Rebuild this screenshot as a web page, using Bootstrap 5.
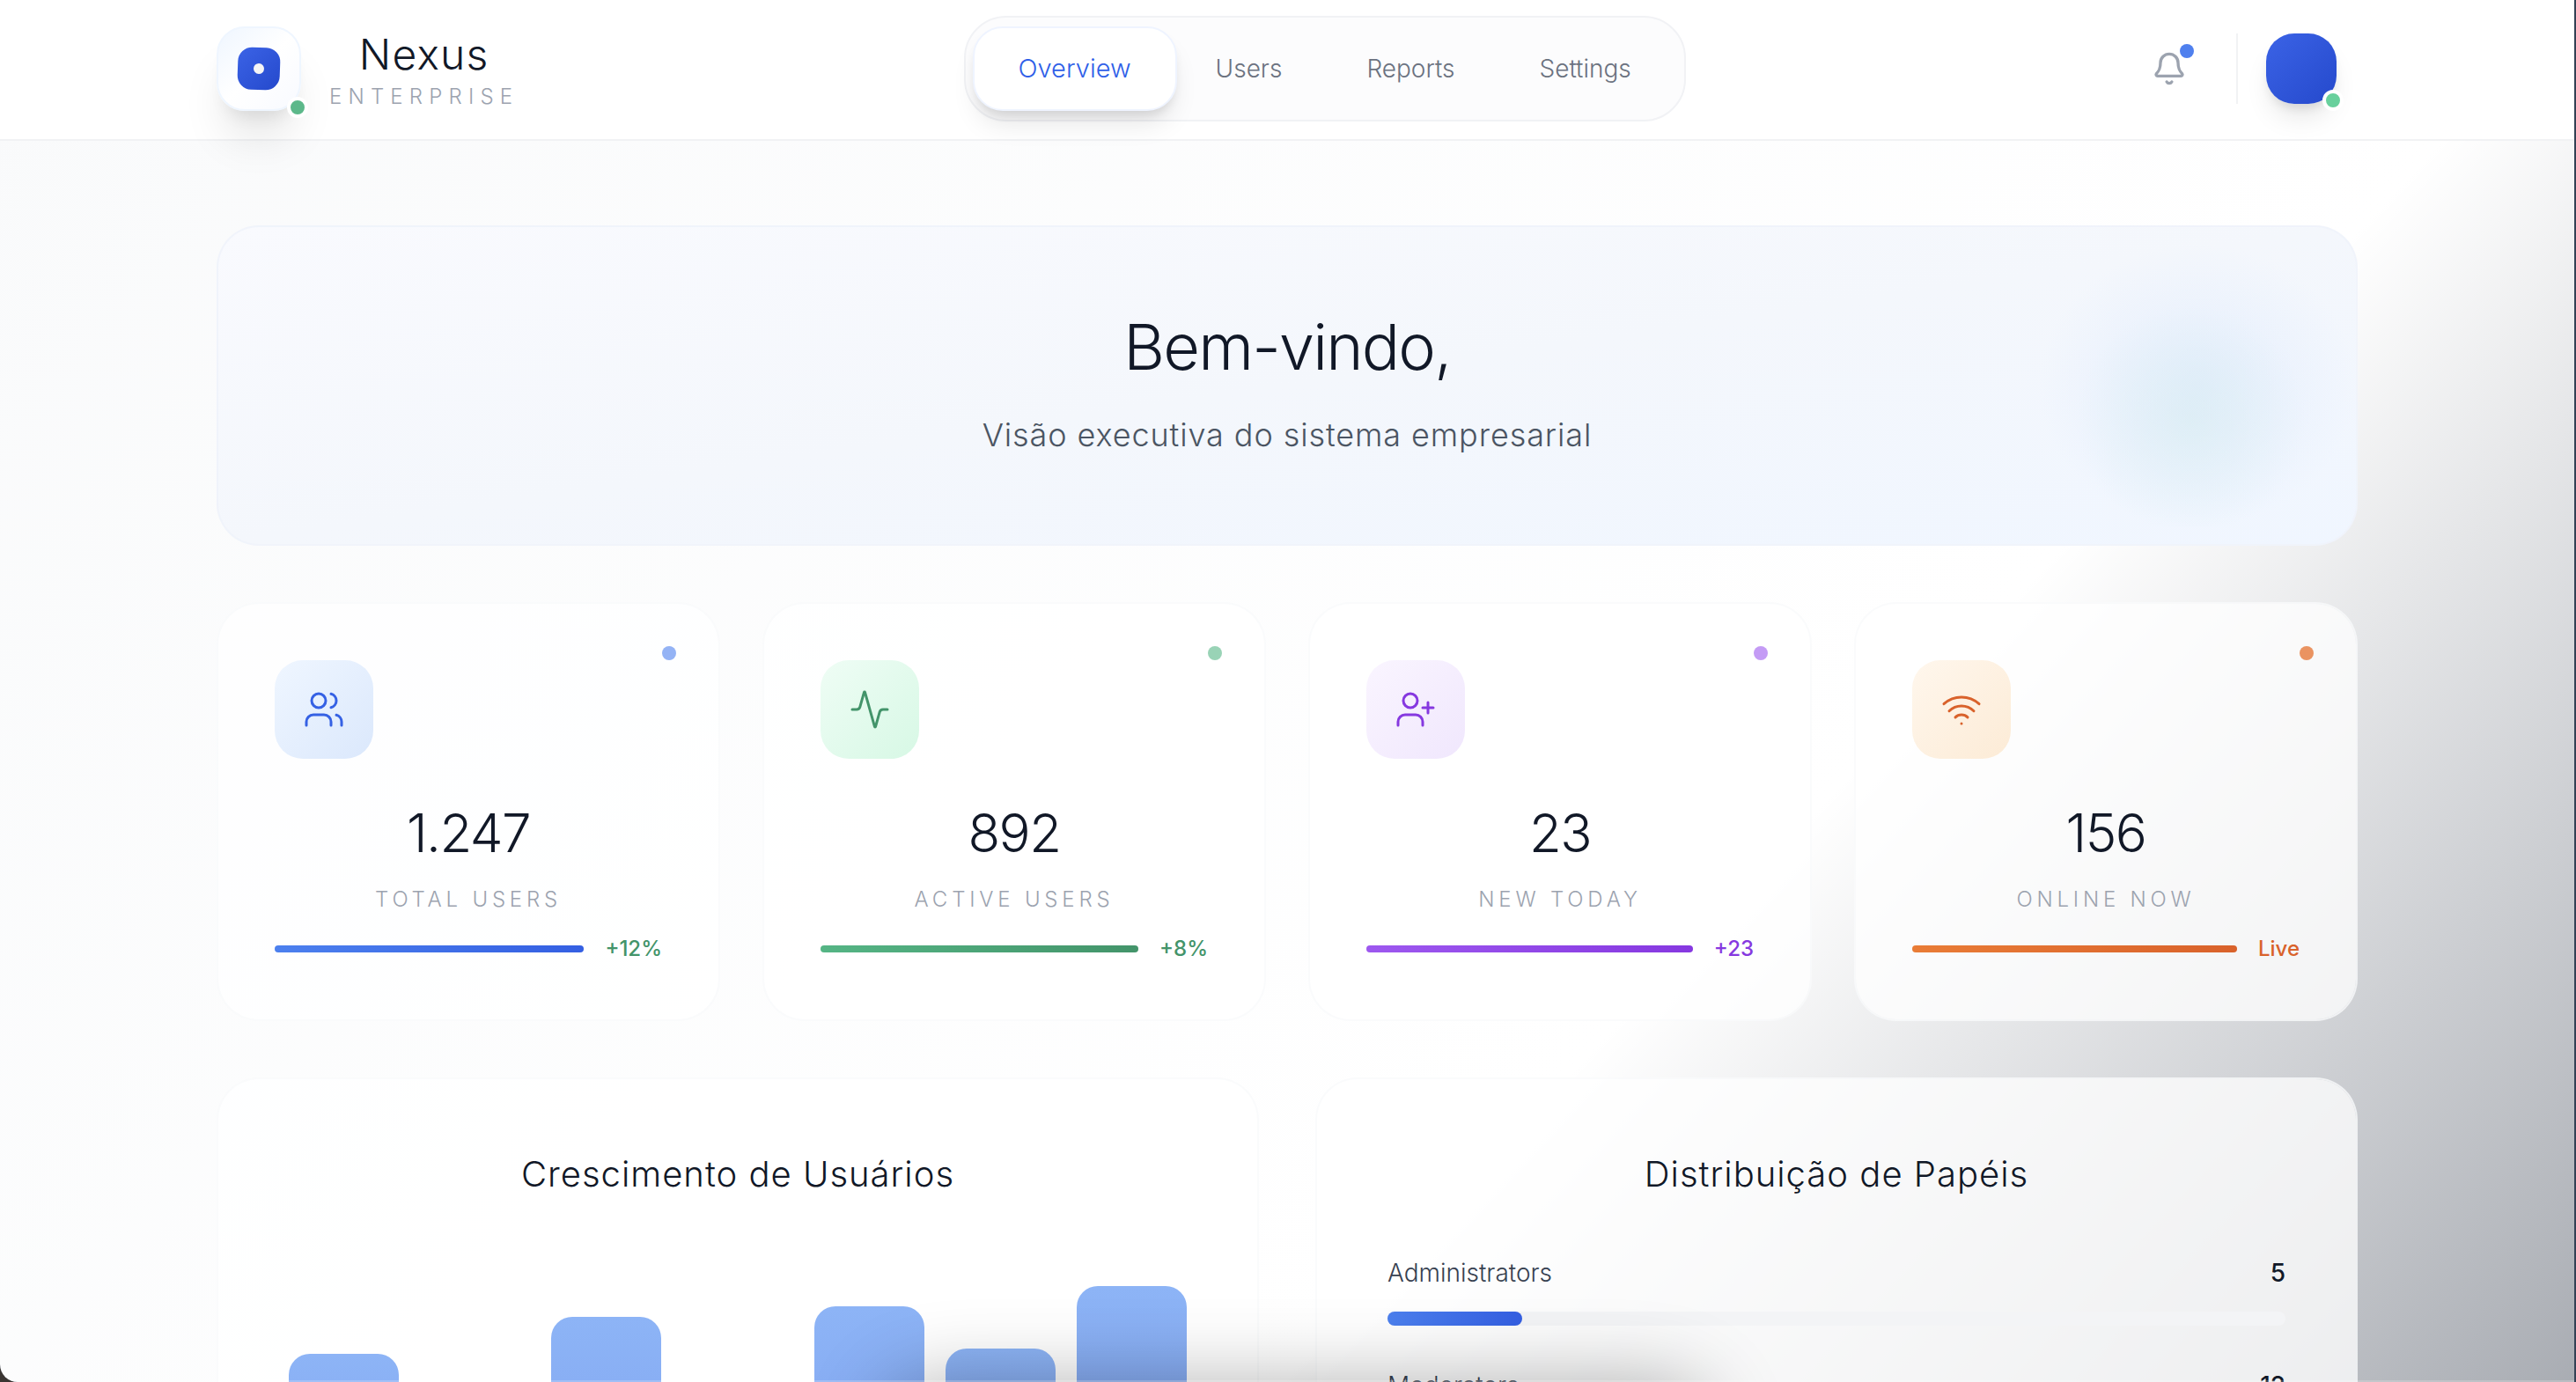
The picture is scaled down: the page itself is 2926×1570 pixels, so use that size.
<!DOCTYPE html>
<html lang="pt-BR">
<head>
<meta charset="utf-8">
<meta name="viewport" content="width=device-width, initial-scale=1">
<title>Nexus Enterprise</title>
<link rel="stylesheet" href="https://cdn.jsdelivr.net/npm/bootstrap@5.3.0/dist/css/bootstrap.min.css">
<style>
  :root { --ink: #111827; --soft: #6b7280; --pale: #9ca3af; }
  body { font-family: Inter, "Liberation Sans", sans-serif; background: #334155; color: var(--ink); }
  h1, h2, p { margin: 0; }
  button { font: inherit; }

  /* app window */
  .app-window { height: 100vh; padding-right: 2px; background: linear-gradient(90deg, #3a3532 50%, #334155 50%); }
  .app-view { height: 100%; overflow: hidden; background: #111827; border-bottom-left-radius: 20px; position: relative; }
  .app-view::after { content: ""; position: absolute; inset: auto 0 0 0; height: 2px; background: rgba(255, 255, 255, .2); z-index: 4; }
  .app-page { background: linear-gradient(to bottom right, #f9fafb, #ffffff, rgba(239, 246, 255, .3)) 0 0 / 100% 3130px no-repeat; min-height: 3130px; }
  .wrap { max-width: 2560px; margin: 0 auto; padding: 0 64px; }

  /* top bar */
  .topbar { background: rgba(255, 255, 255, .9); border-bottom: 2px solid #f1f2f4; height: 160px; padding-bottom: 2px; position: relative; z-index: 2; }
  .logo-tile { width: 96px; height: 96px; border-radius: 32px; border: 2px solid #eff6ff; background: linear-gradient(135deg, #eff6ff, #ffffff 50%, #f8faff); box-shadow: 0 40px 50px -10px rgba(0, 0, 0, .1), 0 16px 20px -12px rgba(0, 0, 0, .1); }
  .logo-core { width: 48px; height: 48px; border-radius: 16px; background: linear-gradient(135deg, #3b63e6, #2549cc); transform: rotate(2deg); }
  .logo-pin { width: 12px; height: 12px; background: #f5f5f5; }
  .presence { width: 24px; height: 24px; border: 4px solid #fff; right: -8px; bottom: -8px; }
  .logo-tile .presence { right: -10px; bottom: -10px; background: #5cb88a; }
  .avatar .presence { background: #68d09c; }
  .brand-name { font-size: 48px; line-height: 64px; font-weight: 300; letter-spacing: .025em; }
  .brand-sub { font-size: 24px; line-height: 32px; font-weight: 300; letter-spacing: .3em; color: var(--pale); }
  .tabs { height: 120px; padding: 12px; border: 2px solid #f1f2f5; border-radius: 48px; background: #fcfcfd; }
  .tab { border: 0; background: none; padding: 0 48px; font-size: 28px; line-height: 40px; font-weight: 300; color: var(--soft); position: relative; }
  .tab-on { color: #2f5fe8; font-size: 29px; isolation: isolate; }
  .tab-on::before { content: ""; position: absolute; inset: -2px -4px; z-index: -1; border-radius: 34px; border: 2px solid #eff4ff; background: #fff; box-shadow: 0 20px 30px -6px rgba(0, 0, 0, .1), 0 8px 12px -4px rgba(0, 0, 0, .1); }
  .bell { border: 0; background: none; padding: 24px; color: var(--pale); }
  .bell-dot { width: 16px; height: 16px; background: #4f80ee; top: 16px; right: 16px; }
  .user-zone { border-left: 2px solid #f1f2f4; padding: 0 24px 0 32px; margin-left: 32px; }
  .avatar { width: 80px; height: 80px; border: 0; padding: 0; border-radius: 32px; background: linear-gradient(135deg, #3b63e6, #2549cc); box-shadow: 0 20px 30px -6px rgba(0, 0, 0, .1), 0 8px 12px -4px rgba(0, 0, 0, .1); }

  /* content */
  .content { padding-top: 96px; display: grid; gap: 64px; }
  .hero { border: 2px solid rgba(239, 243, 251, .9); border-radius: 48px; padding: 96px; background: linear-gradient(to bottom right, #f9fafe, #f4f7fc 50%, #f0f6ff); }
  .hero-glow { width: 360px; height: 320px; right: 0; top: 20px; background: radial-gradient(circle 130px at 48% 62%, rgba(214, 236, 240, .55), rgba(214, 236, 240, 0)), radial-gradient(closest-side, rgba(219, 232, 252, .6), rgba(219, 234, 254, 0)); }
  .hero h1 { font-size: 72px; line-height: 80px; font-weight: 300; letter-spacing: -.025em; }
  .hero p { font-size: 36px; line-height: 56px; font-weight: 300; letter-spacing: .025em; margin-top: 32px; color: #4b5563; }
  .stats { display: grid; grid-template-columns: repeat(4, 1fr); gap: 48px; }
  .panels { display: grid; grid-template-columns: repeat(2, 1fr); gap: 64px; }
  .glass { border: 2px solid rgba(249, 250, 251, .8); border-radius: 48px; background: rgba(255, 255, 255, .75) padding-box; }
  .stat { padding: 64px; }
  .stat-dot { width: 16px; height: 16px; top: 48px; right: 48px; opacity: .6; }
  .stat-icon { width: 112px; height: 112px; border-radius: 32px; margin-bottom: 48px; }
  .stat-num { font-size: 60px; line-height: 72px; font-weight: 300; letter-spacing: -.025em; }
  .stat-label { font-size: 24px; line-height: 32px; font-weight: 300; letter-spacing: .2em; color: var(--pale); margin: 24px 0; }
  .stat-trend { font-size: 24px; line-height: 32px; font-weight: 500; }
  .stat-line { height: 8px; }
  .t-blue .stat-icon { background: linear-gradient(135deg, #eff6ff, #dbe8fc); color: #3561e4; }
  .t-blue .stat-line { background: linear-gradient(90deg, #4c80ee, #345fe2); }
  .t-blue .stat-dot { background: #4c80ee; }
  .t-blue .stat-trend, .t-green .stat-trend { color: #43946a; }
  .t-green .stat-icon { background: linear-gradient(135deg, #effdf5, #d7f8e5); color: #43946a; }
  .t-green .stat-line { background: linear-gradient(90deg, #55b585, #43946a); }
  .t-green .stat-dot { background: #55b585; }
  .t-purple .stat-icon { background: linear-gradient(135deg, #faf5ff, #f0e7fd); color: #8638e0; }
  .t-purple .stat-line { background: linear-gradient(90deg, #9d58ef, #8638e0); }
  .t-purple .stat-trend { color: #8638e0; }
  .t-purple .stat-dot { background: #9d58ef; }
  .t-orange .stat-icon { background: linear-gradient(135deg, #fff7ed, #fcebd6); color: #d9622b; }
  .t-orange .stat-line { background: linear-gradient(90deg, #e97c36, #d9622b); }
  .t-orange .stat-trend { color: #d9622b; }
  .t-orange .stat-dot { background: #e4702e; opacity: .75; }
  .panel { padding: 80px; }
  .panel h2 { font-size: 40px; line-height: 56px; font-weight: 300; letter-spacing: .025em; margin-bottom: 64px; }
  .chart { height: 350px; gap: 24px; }
  .chart-bar { border-radius: 24px 24px 0 0; background: linear-gradient(to bottom, #8db4f6, #7da0ef); }
  .role { font-size: 28px; line-height: 40px; margin-bottom: 48px; }
  .role-name { font-weight: 300; color: #374151; }
  .role-count { font-weight: 500; }
  .role-track { height: 16px; margin-top: 24px; background: #f3f4f6; }
  .role-fill { background: linear-gradient(90deg, #4c80ee, #345fe2); }

  /* shadow of the floating dock under the fold */
  .dock-shadow { position: absolute; left: 50%; bottom: -100px; width: 900px; height: 80px; margin-left: -440px; border-radius: 48px; box-shadow: 0 0 90px 20px rgba(0, 0, 0, .3); z-index: 3; }
</style>
<script src="https://cdn.jsdelivr.net/npm/bootstrap@5.3.0/dist/js/bootstrap.bundle.min.js"></script>
</head>
<body>
<div class="app-window">
<div class="app-view">
<div class="app-page">
  <header class="topbar">
    <div class="wrap h-100 d-flex align-items-center justify-content-between">
      <a href="#" class="d-flex align-items-center text-decoration-none text-reset">
        <span class="logo-tile position-relative d-flex align-items-center justify-content-center">
          <span class="logo-core d-flex align-items-center justify-content-center"><span class="logo-pin rounded-circle"></span></span>
          <span class="presence position-absolute rounded-circle"></span>
        </span>
        <span class="d-flex flex-column text-center ms-4 ps-2">
          <span class="brand-name">Nexus</span>
          <span class="brand-sub">ENTERPRISE</span>
        </span>
      </a>
      <nav class="tabs d-flex align-items-stretch">
        <button type="button" class="tab tab-on" aria-current="page">Overview</button>
        <button type="button" class="tab">Users</button>
        <button type="button" class="tab">Reports</button>
        <button type="button" class="tab">Settings</button>
      </nav>
      <div class="d-flex align-items-center">
        <button type="button" class="bell position-relative d-flex" aria-label="Notifications">
          <svg width="40" height="40" viewBox="0 0 24 24" fill="none" stroke="currentColor" stroke-width="2" stroke-linecap="round" stroke-linejoin="round"><path d="M10.268 21a2 2 0 0 0 3.464 0"/><path d="M3.262 15.326A1 1 0 0 0 4 17h16a1 1 0 0 0 .74-1.673C19.41 13.956 18 12.499 18 8A6 6 0 0 0 6 8c0 4.499-1.411 5.956-2.738 7.326"/></svg>
          <span class="bell-dot position-absolute rounded-circle"></span>
        </button>
        <div class="user-zone">
          <button type="button" class="avatar position-relative d-block" aria-label="Account"><span class="presence position-absolute rounded-circle"></span></button>
        </div>
      </div>
    </div>
  </header>

  <main class="wrap content">
    <section class="hero position-relative text-center">
      <div class="hero-glow position-absolute"></div>
      <h1>Bem-vindo,</h1>
      <p>Visão executiva do sistema empresarial</p>
    </section>

    <section class="stats">
      <article class="glass stat t-blue position-relative">
        <span class="stat-dot position-absolute rounded-circle"></span>
        <div class="stat-icon d-flex align-items-center justify-content-center">
          <svg width="48" height="48" viewBox="0 0 24 24" fill="none" stroke="currentColor" stroke-width="1.5" stroke-linecap="round" stroke-linejoin="round"><path d="M16 21v-2a4 4 0 0 0-4-4H6a4 4 0 0 0-4 4v2"/><circle cx="9" cy="7" r="4"/><path d="M22 21v-2a4 4 0 0 0-3-3.87"/><path d="M16 3.13a4 4 0 0 1 0 7.75"/></svg>
        </div>
        <div class="stat-num text-center">1.247</div>
        <div class="stat-label text-center">TOTAL USERS</div>
        <div class="d-flex align-items-center gap-4"><span class="stat-line flex-grow-1 rounded-pill"></span><span class="stat-trend">+12%</span></div>
      </article>
      <article class="glass stat t-green position-relative">
        <span class="stat-dot position-absolute rounded-circle"></span>
        <div class="stat-icon d-flex align-items-center justify-content-center">
          <svg width="48" height="48" viewBox="0 0 24 24" fill="none" stroke="currentColor" stroke-width="1.5" stroke-linecap="round" stroke-linejoin="round"><path d="M22 12h-2.48a2 2 0 0 0-1.93 1.46l-2.35 8.36a.25.25 0 0 1-.48 0L9.24 2.18a.25.25 0 0 0-.48 0l-2.35 8.36A2 2 0 0 1 4.49 12H2"/></svg>
        </div>
        <div class="stat-num text-center">892</div>
        <div class="stat-label text-center">ACTIVE USERS</div>
        <div class="d-flex align-items-center gap-4"><span class="stat-line flex-grow-1 rounded-pill"></span><span class="stat-trend">+8%</span></div>
      </article>
      <article class="glass stat t-purple position-relative">
        <span class="stat-dot position-absolute rounded-circle"></span>
        <div class="stat-icon d-flex align-items-center justify-content-center">
          <svg width="48" height="48" viewBox="0 0 24 24" fill="none" stroke="currentColor" stroke-width="1.5" stroke-linecap="round" stroke-linejoin="round"><path d="M16 21v-2a4 4 0 0 0-4-4H6a4 4 0 0 0-4 4v2"/><circle cx="9" cy="7" r="4"/><path d="M19 8v6"/><path d="M22 11h-6"/></svg>
        </div>
        <div class="stat-num text-center">23</div>
        <div class="stat-label text-center">NEW TODAY</div>
        <div class="d-flex align-items-center gap-4"><span class="stat-line flex-grow-1 rounded-pill"></span><span class="stat-trend">+23</span></div>
      </article>
      <article class="glass stat t-orange position-relative">
        <span class="stat-dot position-absolute rounded-circle"></span>
        <div class="stat-icon d-flex align-items-center justify-content-center">
          <svg width="48" height="48" viewBox="0 0 24 24" fill="none" stroke="currentColor" stroke-width="1.5" stroke-linecap="round" stroke-linejoin="round"><path d="M12 20h.01"/><path d="M2 8.82a15 15 0 0 1 20 0"/><path d="M5 12.859a10 10 0 0 1 14 0"/><path d="M8.5 16.429a5 5 0 0 1 7 0"/></svg>
        </div>
        <div class="stat-num text-center">156</div>
        <div class="stat-label text-center">ONLINE NOW</div>
        <div class="d-flex align-items-center gap-4"><span class="stat-line flex-grow-1 rounded-pill"></span><span class="stat-trend">Live</span></div>
      </article>
    </section>

    <section class="panels">
      <article class="glass panel">
        <h2 class="text-center">Crescimento de Usuários</h2>
        <div class="chart d-flex align-items-end">
          <div class="chart-bar flex-fill" style="height:68%"></div>
          <div class="chart-bar flex-fill" style="height:48%"></div>
          <div class="chart-bar flex-fill" style="height:80%"></div>
          <div class="chart-bar flex-fill" style="height:55%"></div>
          <div class="chart-bar flex-fill" style="height:83.5%"></div>
          <div class="chart-bar flex-fill" style="height:69.7%"></div>
          <div class="chart-bar flex-fill" style="height:90%"></div>
        </div>
      </article>
      <article class="glass panel">
        <h2 class="text-center">Distribuição de Papéis</h2>
        <div class="role">
          <div class="d-flex justify-content-between"><span class="role-name">Administrators</span><span class="role-count">5</span></div>
          <div class="role-track rounded-pill"><div class="role-fill h-100 rounded-pill" style="width:15%"></div></div>
        </div>
        <div class="role">
          <div class="d-flex justify-content-between"><span class="role-name">Moderators</span><span class="role-count">12</span></div>
          <div class="role-track rounded-pill"><div class="role-fill h-100 rounded-pill" style="width:25%"></div></div>
        </div>
      </article>
    </section>
  </main>
</div>
<div class="dock-shadow"></div>
</div>
</div>
</body>
</html>
